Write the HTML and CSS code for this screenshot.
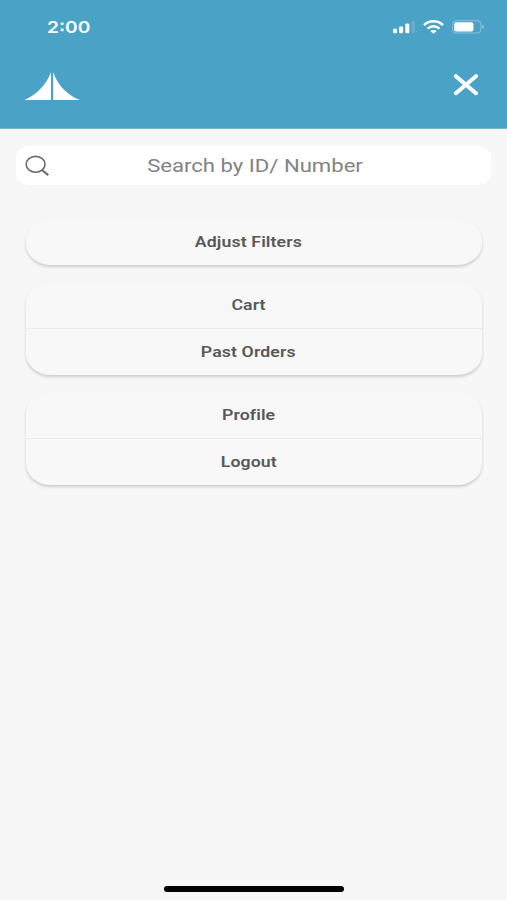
FILE: index.html
```
<!DOCTYPE html>
<html lang="en">
<head>
    <meta charset="UTF-8">
    <meta name="viewport" content="width=device-width, initial-scale=1.0">
    <title>Menu</title>
    <link rel="stylesheet" href="styles.css">
</head>
<body>
    <header class="header">
        <div class="status-bar">
            <span class="time">2:00</span>
            <div class="status-icons">
                <svg width="22" height="14" viewBox="0 0 22 14" fill="#fff">
                    <rect x="0" y="8.7" width="4" height="4.6" rx="1.2"/>
                    <rect x="6.1" y="6.6" width="4" height="6.7" rx="1.2"/>
                    <rect x="12.3" y="3.5" width="4" height="9.8" rx="1.2"/>
                    <rect x="18.6" y="0.8" width="3.2" height="12.5" rx="1.2" opacity="0.15"/>
                </svg>
                <svg width="21" height="14" viewBox="0 0 21 14" fill="none" stroke="#fff" stroke-width="2.5">
                    <path d="M1 5.1 C6.4 0.1 14.6 0.1 20 5.1"/>
                    <path d="M4.6 8.6 C8 5.6 13 5.6 16.4 8.6"/>
                    <path d="M7.3 11.1 C9.1 9.5 11.9 9.5 13.7 11.1 L10.5 13.8 Z" fill="#fff" stroke="none"/>
                </svg>
                <svg width="33" height="14" viewBox="0 0 33 14">
                    <rect x="0.6" y="0.6" width="28.3" height="12.4" rx="3.6" fill="none" stroke="#fff" stroke-opacity="0.35"/>
                    <rect x="2.2" y="2.2" width="19.2" height="9.2" rx="2" fill="#fff"/>
                    <path d="M30.4 5 C32.6 5.6 32.6 8 30.4 8.6 Z" fill="#fff" opacity="0.45"/>
                </svg>
            </div>
        </div>
        <div class="nav">
            <svg class="logo" width="56" height="29" viewBox="0 0 56 29" fill="#fff">
                <path d="M27 0 C22.5 13 12.5 22.5 0.5 28 H27 Z"/>
                <path d="M29.2 0 C33.5 13 43 23 55.8 28 H29.2 Z"/>
            </svg>
            <button class="close" aria-label="Close">
                <svg width="26" height="22" viewBox="0 0 26 22" fill="none" stroke="#fff" stroke-width="4" stroke-linecap="round">
                    <path d="M2.9 2.2 L23 19.2 M23 2.2 L2.9 19.2"/>
                </svg>
            </button>
        </div>
    </header>

    <main class="content">
        <div class="search">
            <svg class="search-icon" width="25" height="21" viewBox="0 0 25 21" fill="none" stroke="#6c6c6c" stroke-width="1.6">
                <ellipse cx="10.6" cy="9.3" rx="9.4" ry="7.9"/>
                <path d="M16.8 15 L23.3 20.1" stroke-width="2"/>
            </svg>
            <span class="search-text">Search by ID/ Number</span>
        </div>

        <nav class="menu">
            <div class="card">
                <a class="item"><span>Adjust Filters</span></a>
            </div>
            <div class="card">
                <a class="item"><span>Cart</span></a>
                <a class="item"><span>Past Orders</span></a>
            </div>
            <div class="card">
                <a class="item"><span>Profile</span></a>
                <a class="item"><span>Logout</span></a>
            </div>
        </nav>
    </main>

    <div class="home-bar"></div>
</body>
</html>
```
FILE: styles.css
```
* {
    box-sizing: border-box;
}
body {
    margin: 0;
    height: 900px;
    display: flex;
    flex-direction: column;
    font-family: Roboto, "Liberation Sans", sans-serif;
    background-color: #f7f7f7;
    overflow: hidden;
}
svg {
    display: block;
}
.header {
    height: 129px;
    background-color: #4aa3c7;
    border-bottom: 1px solid #7fb9d0;
}
.status-bar {
    display: flex;
    justify-content: space-between;
    align-items: center;
    height: 54px;
    padding: 0 22px 0 47px;
}
.time {
    font-family: Inter, Roboto, sans-serif;
    font-size: 16.5px;
    font-weight: 600;
    color: #fff;
    transform: scaleX(1.16);
    transform-origin: left;
}
.status-icons {
    display: flex;
    gap: 8px;
}
.nav {
    display: flex;
    justify-content: space-between;
    align-items: center;
    padding: 18px 28px 0 24px;
}
.close {
    padding: 0;
    margin-top: -4px;
    border: none;
    background: none;
}
.content {
    flex: 1;
    padding: 17px 16px 0;
}
.search {
    display: flex;
    align-items: center;
    height: 39px;
    padding: 0 9px;
    background-color: #fff;
    border-radius: 14px / 11px;
}
.search-text {
    flex: 1;
    margin-right: 22px;
    text-align: center;
    font-size: 18.5px;
    color: #838383;
    transform: scaleX(1.195);
}
.menu {
    display: flex;
    flex-direction: column;
    gap: 17px;
    padding: 34px 9px 0 10px;
}
.card {
    border-radius: 25px / 21px;
    background-color: #f8f8f8;
    box-shadow: 0 2px 3px rgba(0, 0, 0, 0.17);
}
.item {
    display: flex;
    align-items: center;
    justify-content: center;
    height: 46px;
    font-size: 15px;
    font-weight: 600;
    letter-spacing: 0.1px;
    color: #58585a;
}
.item + .item {
    height: 47px;
    border-top: 1px solid #ececec;
}
.item span {
    transform: scaleX(1.18);
    margin-right: 11px;
}
.home-bar {
    width: 180px;
    height: 6px;
    margin: 0 0 8px 164px;
    border-radius: 3px;
    background-color: #000;
}
```
